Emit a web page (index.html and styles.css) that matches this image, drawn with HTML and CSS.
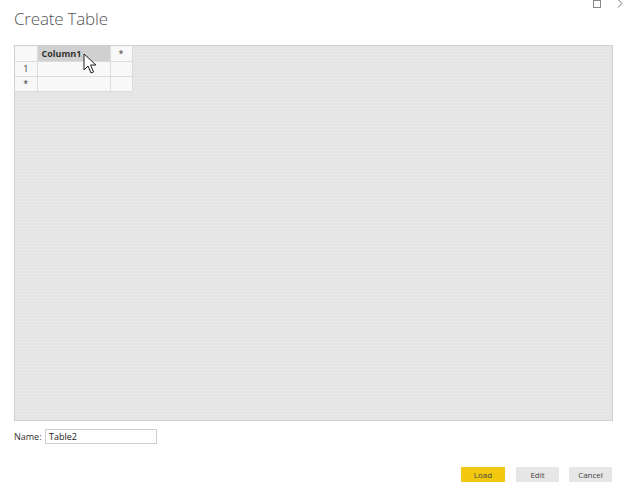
FILE: index.html
```html
<!DOCTYPE html>
<html>
<head>
<meta charset="utf-8">
<link rel="stylesheet" href="styles.css">
</head>
<body>
<div class="dialog">
  <div class="winctl">
    <span class="maxbox"></span>
    <svg class="chev" width="6" height="9" viewBox="0 0 6 9">
      <polyline points="1,0.5 5,4.5 1,8.5" fill="none" stroke="#777" stroke-width="1"/>
    </svg>
  </div>
  <h1 class="title">Create Table</h1>
  <div class="gridarea">
    <table class="sheet">
      <tr class="hrow">
        <td class="corner"></td>
        <td class="colhead">Column1</td>
        <td class="addcol">*</td>
      </tr>
      <tr>
        <td class="rowhead">1</td>
        <td class="cell"></td>
        <td class="cell"></td>
      </tr>
      <tr>
        <td class="rowhead">*</td>
        <td class="cell"></td>
        <td class="cell"></td>
      </tr>
    </table>
    <svg class="cursor" width="14" height="22" viewBox="0 0 14 22">
      <path d="M1 1 L1 17 L5 13 L8 20 L10.5 19 L7.5 12 L13 12 Z" fill="#fff" stroke="#222" stroke-width="1" stroke-linejoin="round"/>
    </svg>
  </div>
  <div class="namerow">
    <label class="namelabel">Name:</label>
    <div class="nameinput">Table2</div>
  </div>
  <div class="buttons">
    <button class="btn primary">Load</button>
    <button class="btn">Edit</button>
    <button class="btn">Cancel</button>
  </div>
</div>
</body>
</html>
```
FILE: styles.css
```css
html, body {
  margin: 0;
  padding: 0;
  background: #fff;
  width: 624px;
  height: 494px;
  overflow: hidden;
  font-family: "Open Sans", "Liberation Sans", sans-serif;
}
.dialog {
  position: relative;
  width: 624px;
  height: 494px;
  padding: 0 11px 0 14px;
  box-sizing: border-box;
  display: flex;
  flex-direction: column;
}
.winctl {
  position: absolute;
  top: 0;
  right: 1px;
  display: flex;
  align-items: flex-start;
  gap: 16px;
}
.maxbox {
  width: 6px;
  height: 6px;
  border: 1px solid #888;
}
.chev {
  display: block;
  margin-top: -1px;
}
.title {
  margin: 7px 0 0 0;
  font-weight: 300;
  font-size: 17px;
  line-height: 24px;
  color: #555;
  height: 38px;
  letter-spacing: -0.2px;
}
.gridarea {
  position: relative;
  height: 376px;
  border: 1px solid #cfcfcf;
  background-color: #e5e5e5;
  background-image: repeating-linear-gradient(to bottom, #e5e5e5 0, #e5e5e5 2px, #e8e8e8 2px, #e8e8e8 3px);
  box-sizing: border-box;
}
.sheet {
  border-collapse: collapse;
  font-size: 9px;
  color: #333;
}
.sheet td {
  height: 15px;
  padding: 0;
  border: 1px solid #dcdcdc;
  background: #f8f8f8;
  box-sizing: border-box;
}
.corner { width: 22px; border-top: none !important; border-left: none !important; }
.colhead {
  width: 73px;
  background: #d0d0d0 !important;
  font-weight: bold;
  padding-left: 4px !important;
  border-top: none !important;
}
.addcol { width: 22px; text-align: center; border-top: none !important; }
.rowhead { text-align: center; border-left: none !important; }
.cursor {
  position: absolute;
  left: 68px;
  top: 7px;
}
.namerow {
  display: flex;
  align-items: center;
  margin-top: 8px;
  height: 15px;
}
.namelabel {
  font-size: 9px;
  color: #333;
  width: 31px;
}
.nameinput {
  width: 112px;
  height: 15px;
  border: 1px solid #cfcfcf;
  box-sizing: border-box;
  font-size: 9px;
  line-height: 13px;
  padding-left: 3px;
  color: #222;
}
.buttons {
  display: flex;
  justify-content: flex-end;
  gap: 10px;
  margin-top: 23px;
  padding-right: 1px;
}
.btn {
  width: 43px;
  height: 15px;
  border: none;
  background: #e6e6e6;
  font-family: "Open Sans", "Liberation Sans", sans-serif;
  font-size: 8px;
  color: #444;
  padding: 0;
}
.btn.primary {
  width: 44px;
  margin-right: 1px;
  background: #f2c811;
}
```
